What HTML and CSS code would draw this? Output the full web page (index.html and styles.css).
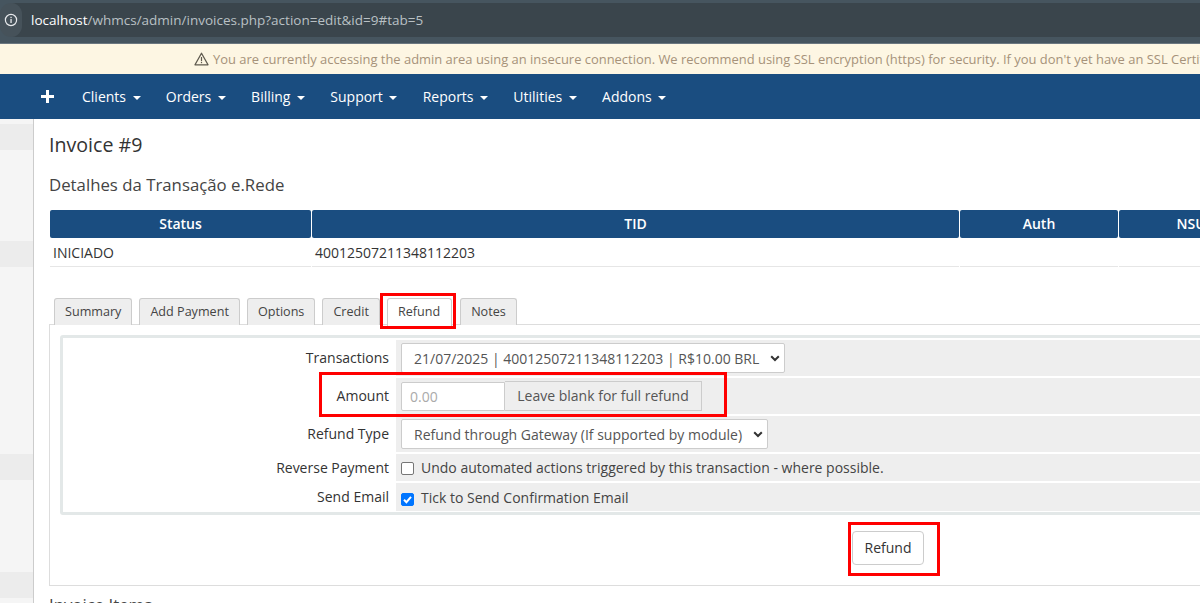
FILE: index.html
```html
<!DOCTYPE html>
<html lang="en">
<head>
<meta charset="utf-8">
<title>Invoice #9</title>
<link rel="stylesheet" href="styles.css">
</head>
<body>
<div class="browser">
  <div class="omnibox">
    <span class="site-info">
      <svg width="14" height="14" viewBox="0 0 14 14"><circle cx="7" cy="7" r="5.6" fill="none" stroke="#e8eaed" stroke-width="1.2"/><rect x="6.4" y="6" width="1.3" height="4" fill="#e8eaed"/><rect x="6.4" y="3.8" width="1.3" height="1.3" fill="#e8eaed"/></svg>
    </span>
    <span class="url"><b>localhost</b>/whmcs/admin/invoices.php?action=edit&amp;id=9#tab=5</span>
  </div>
</div>
<div class="notice">
  <svg class="warn" width="15" height="14" viewBox="0 0 15 14"><path d="M7.5 1.2 14 12.8H1Z" fill="none" stroke="#5f5a4f" stroke-width="1.3" stroke-linejoin="round"/><rect x="6.9" y="5" width="1.2" height="4.2" fill="#5f5a4f"/><rect x="6.9" y="10" width="1.2" height="1.2" fill="#5f5a4f"/></svg>
  <span>You are currently accessing the admin area using an insecure connection. We recommend using SSL encryption (https) for security. If you don't yet have an SSL Certificate, please contact your provider.</span>
</div>
<nav class="navbar">
  <svg class="plus" width="13" height="13" viewBox="0 0 13 13"><path d="M5 0h3v5h5v3H8v5H5V8H0V5h5Z" fill="#fff"/></svg>
  <a class="nav-item">Clients <i class="caret"></i></a>
  <a class="nav-item">Orders <i class="caret"></i></a>
  <a class="nav-item">Billing <i class="caret"></i></a>
  <a class="nav-item">Support <i class="caret"></i></a>
  <a class="nav-item">Reports <i class="caret"></i></a>
  <a class="nav-item">Utilities <i class="caret"></i></a>
  <a class="nav-item">Addons <i class="caret"></i></a>
</nav>
<div class="layout">
  <aside class="sidebar">
    <div class="band band-1"></div>
    <div class="band band-2"></div>
    <div class="band band-3"></div>
    <div class="band band-4"></div>
  </aside>
  <main class="content">
    <h1 class="title">Invoice #9</h1>
    <h2 class="subtitle">Detalhes da Transação e.Rede</h2>
    <div class="grid-table">
      <div class="th">Status</div><div class="th">TID</div><div class="th">Auth</div><div class="th">NSU</div>
      <div class="td">INICIADO</div><div class="td">40012507211348112203</div><div class="td"></div><div class="td"></div>
    </div>
    <div class="tabs">
      <span class="tab">Summary</span>
      <span class="tab">Add Payment</span>
      <span class="tab">Options</span>
      <span class="tab">Credit</span>
      <span class="tab active">Refund<span class="mark mark-tab"></span></span>
      <span class="tab">Notes</span>
    </div>
    <section class="pane">
      <div class="form-box">
        <div class="row row-select">
          <div class="label">Transactions</div>
          <div class="field"><span class="select select-tx">21/07/2025 | 40012507211348112203 | R$10.00 BRL<svg class="chev" width="10" height="7" viewBox="0 0 10 7"><path d="M1.2 1.2 5 5l3.8-3.8" fill="none" stroke="#333" stroke-width="2"/></svg></span></div>
        </div>
        <div class="row row-select">
          <div class="label">Amount</div>
          <div class="field">
            <span class="input-group">
              <span class="input">0.00</span><span class="addon">Leave blank for full refund</span>
              <span class="mark mark-amount"></span>
            </span>
          </div>
        </div>
        <div class="row row-select">
          <div class="label">Refund Type</div>
          <div class="field"><span class="select select-type">Refund through Gateway (If supported by module)<svg class="chev" width="10" height="7" viewBox="0 0 10 7"><path d="M1.2 1.2 5 5l3.8-3.8" fill="none" stroke="#333" stroke-width="2"/></svg></span></div>
        </div>
        <div class="row row-check">
          <div class="label">Reverse Payment</div>
          <div class="field"><span class="check"></span>Undo automated actions triggered by this transaction - where possible.</div>
        </div>
        <div class="row row-check row-last">
          <div class="label">Send Email</div>
          <div class="field"><span class="check checked"><svg width="13" height="13" viewBox="0 0 13 13"><path d="M3 6.8 5.4 9.2 10 3.8" fill="none" stroke="#fff" stroke-width="2"/></svg></span>Tick to Send Confirmation Email</div>
        </div>
      </div>
      <div class="actions">
        <span class="btn">Refund<span class="mark mark-btn"></span></span>
      </div>
    </section>
    <h2 class="subtitle items">Invoice Items</h2>
  </main>
</div>
</body>
</html>
```
FILE: styles.css
```css
* { box-sizing: border-box; }
html, body { margin: 0; height: 603px; overflow: hidden; }
body { width: 1200px; font-family: "Open Sans", sans-serif; font-size: 14px; color: #333; background: #fff; }

.browser { height: 44px; padding-top: 3px; background: #46555f; border-bottom: 1px solid #6b7780; }
.omnibox { height: 34px; background: #3a454c; display: flex; align-items: center; border-radius: 17px 0 0 17px; }
.site-info { width: 22px; height: 34px; margin-right: 9px; background: #46525a; border-radius: 17px; display: flex; align-items: center; justify-content: center; }
.url { font-size: 13.5px; color: #b9c0c4; }
.url b { font-weight: 400; color: #fff; }

.notice { height: 30px; background: #fdf6e3; color: #a6927a; font-size: 12.95px; padding-left: 194px; display: flex; align-items: center; gap: 4px; white-space: nowrap; overflow: hidden; }
.warn { flex: none; }

.navbar { height: 45px; background: #1a4d80; display: flex; align-items: center; padding-left: 41px; color: #fff; }
.plus { margin-right: 28px; flex: none; }
.nav-item { font-size: 14px; margin-right: 25.2px; white-space: nowrap; }
.caret { display: inline-block; width: 0; height: 0; margin-left: 3px; vertical-align: middle; border-top: 4px solid #fff; border-left: 4px solid transparent; border-right: 4px solid transparent; }

.layout { display: flex; height: 484px; }
.sidebar { position: relative; width: 34px; flex: none; background: #f5f5f5; border-right: 1px solid #ccc; }
.band { position: absolute; left: 0; right: 0; background: #ececec; }
.band-1 { top: 5px; height: 26px; }
.band-2 { top: 122px; height: 26px; }
.band-3 { top: 335px; height: 26px; }
.band-4 { top: 453px; height: 26px; }

.content { flex: none; width: 1700px; padding-left: 15px; }
.title { margin: 14px 0 0; font-size: 19.6px; font-weight: 400; line-height: 24px; color: #333; }
.subtitle { margin: 17px 0 0; font-size: 16.8px; font-weight: 400; line-height: 22px; color: #444; }
.grid-table { margin: 14px 0 0 1px; display: grid; grid-template-columns: 261px 647px 158px 144px; column-gap: 1px; }
.th { height: 28px; background: #1a4d80; color: #fff; font-weight: 600; text-align: center; line-height: 28px; border-radius: 2px; }
.td { height: 29px; padding: 0 3px; line-height: 30px; border-bottom: 1px solid #e6e6e6; color: #333; }

.tabs { margin: 31px 0 0 5px; display: flex; gap: 7px; position: relative; z-index: 1; }
.tab { position: relative; height: 27px; padding: 0 10px; line-height: 25px; font-size: 12.6px; background: #eee; border: 1px solid #ccc; border-bottom: 0; border-radius: 3px 3px 0 0; color: #444; }
.tab.active { background: #fff; height: 28px; margin: 0 1px -1px 0; padding-right: 11px; }

.pane { width: 1678px; height: 262px; margin-top: -1px; border: 1px solid #ddd; padding: 10px 10px 0; }
.form-box { border: 3px solid #e3e8e8; border-radius: 3px; padding: 2px 0; height: 180px; }
.row { display: grid; grid-template-columns: 333px 1fr; margin-bottom: 2px; }
.row-select { height: 36px; }
.row-check { height: 27px; }
.row-last { height: 28px; margin-bottom: 0; }
.label { text-align: right; padding: 8px 7px 0 0; color: #333; line-height: 20px; }
.row-check .label { padding-top: 4px; }
.field { background: #eee; padding: 3px 5px; display: flex; align-items: center; color: #444; }
.select { display: inline-flex; align-items: center; height: 30px; background: #fff; border: 1px solid #ccc; border-radius: 2px; padding-left: 12px; color: #555; white-space: nowrap; }
.select-tx { width: 384px; }
.select-type { width: 367px; }
.chev { margin-left: auto; margin-right: 4px; }
.input-group { position: relative; display: inline-flex; align-items: flex-end; height: 30px; }
.input { width: 104px; height: 29px; background: #fff; border: 1px solid #ccc; border-radius: 2px 0 0 2px; padding-left: 8px; line-height: 28px; color: #aaa; }
.addon { width: 197px; height: 30px; background: #eee; border: 1px solid #ccc; border-left: 0; text-align: center; line-height: 28px; color: #555; }
.check { width: 13px; height: 13px; flex: none; margin: 2px 7px 0 0; border: 1px solid #767676; border-radius: 2px; background: #fff; }
.check.checked { margin-top: 4px; background: #0075ff; border-color: #0075ff; }
.check svg { display: block; margin: -1px; }

.actions { display: flex; justify-content: center; margin-top: 16px; }
.btn { position: relative; height: 34px; padding: 0 12px; border: 1px solid #ccc; border-radius: 4px; line-height: 32px; color: #333; background: #fff; }

.mark { position: absolute; border: 3px solid #f00; pointer-events: none; }
.mark-tab { left: -8px; top: -6px; width: 76px; height: 36px; }
.mark-amount { left: -82px; top: -9px; width: 408px; height: 45px; }
.mark-btn { left: -5px; top: -10px; width: 92px; height: 54px; }

.items { margin-top: 8px; }
```
